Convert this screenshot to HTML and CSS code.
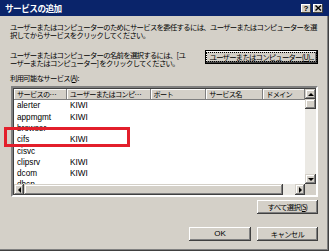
FILE: index.html
```html
<!DOCTYPE html>
<html>
<head>
    <title>サービスの追加</title>
    <link rel="stylesheet" href="styles.css">
</head>
<body>
    <div class="window">
        <div class="titlebar">
            <span class="title">サービスの追加</span>
            <div class="title-buttons">
                <span class="tbtn">?</span>
                <span class="tbtn tbtn-close">
                    <svg width="7" height="6" viewBox="0 0 7 6"><path d="M0.5 0.5 L6 5.5 M6 0.5 L0.5 5.5" stroke="#000" stroke-width="1.4"/></svg>
                </span>
            </div>
        </div>

        <div class="content">
            <p class="intro">ユーザーまたはコンピューターのためにサービスを委任するには、ユーザーまたはコンピューターを選<br>択してからサービスをクリックしてください。</p>

            <div class="pick-row">
                <p class="intro">ユーザーまたはコンピューターの名前を選択するには、[ユ<br>ーザーまたはコンピューター] をクリックしてください。</p>
                <button class="btn btn-default"><span class="focus">ユーザーまたはコンピューター(<u>U</u>)...</span></button>
            </div>

            <div class="label">利用可能なサービス(<u>A</u>):</div>

            <div class="listview">
                <div class="list-main">
                    <div class="list-header">
                        <div class="hcol c1 cut">サービスの種類</div>
                        <div class="hcol c2 cut">ユーザーまたはコンピューター</div>
                        <div class="hcol c3">ポート</div>
                        <div class="hcol c4">サービス名</div>
                        <div class="hcol c5">ドメイン</div>
                    </div>
                    <div class="list-rows">
                        <div class="row"><span class="c1">alerter</span><span class="c2">KIWI</span></div>
                        <div class="row"><span class="c1">appmgmt</span><span class="c2">KIWI</span></div>
                        <div class="row"><span class="c1">browser</span><span class="c2"></span></div>
                        <div class="row"><span class="c1">cifs</span><span class="c2">KIWI</span></div>
                        <div class="row"><span class="c1">cisvc</span><span class="c2"></span></div>
                        <div class="row"><span class="c1">clipsrv</span><span class="c2">KIWI</span></div>
                        <div class="row"><span class="c1">dcom</span><span class="c2">KIWI</span></div>
                        <div class="row"><span class="c1">dhcp</span><span class="c2"></span></div>
                    </div>
                </div>
                <div class="vscroll">
                    <div class="sbtn"><span class="arrow up"></span></div>
                    <div class="vthumb"></div>
                    <div class="track"></div>
                    <div class="sbtn"><span class="arrow down"></span></div>
                </div>
                <div class="hscroll">
                    <div class="sbtn sbtn-h"><span class="arrow left"></span></div>
                    <div class="hthumb"></div>
                    <div class="track"></div>
                    <div class="sbtn sbtn-h"><span class="arrow right"></span></div>
                </div>
                <div class="corner"></div>
            </div>

            <div class="btn-row">
                <button class="btn btn-wide">すべて選択(<u>S</u>)</button>
            </div>

            <div class="btn-row btn-row-bottom">
                <button class="btn btn-ok">OK</button>
                <button class="btn btn-wide">キャンセル</button>
            </div>
        </div>

        <div class="highlight"></div>
    </div>
</body>
</html>
```

FILE: styles.css
```css
* {
    box-sizing: border-box;
}

body {
    margin: 0;
    padding: 0;
    font-family: "Noto Sans CJK JP", "Liberation Sans", sans-serif;
}

.window {
    position: relative;
    width: 329px;
    height: 251px;
    background: #d4d0c8;
    box-shadow: inset -1px -1px #404040, inset -2px -2px #808080;
    display: flex;
    flex-direction: column;
    overflow: hidden;
}

.titlebar {
    height: 16px;
    background: #0a246a;
    color: white;
    display: flex;
    align-items: center;
    justify-content: space-between;
    padding: 0 5px 0 5px;
}

.title {
    font-weight: bold;
    font-size: 8.6px;
    letter-spacing: -0.5px;
    line-height: 16px;
}

.title-buttons {
    display: flex;
    gap: 2px;
    padding-right: 1px;
}

.tbtn {
    width: 10px;
    height: 9px;
    background: #d4d0c8;
    color: black;
    font-family: "Liberation Sans", sans-serif;
    font-weight: bold;
    font-size: 8px;
    line-height: 9px;
    text-align: center;
    display: flex;
    align-items: center;
    justify-content: center;
    box-shadow: inset -1px -1px #404040, inset 1px 1px #fff;
}

.content {
    padding: 0 11px 0 10px;
    display: flex;
    flex-direction: column;
}

.intro {
    margin: 6.5px 0 0;
    font-size: 7.4px;
    letter-spacing: -0.72px;
    line-height: 8.3px;
    color: #000;
    white-space: nowrap;
}

.pick-row {
    margin-top: 11px;
    display: flex;
    justify-content: space-between;
    align-items: flex-start;
    height: 14px;
}

.pick-row .intro {
    margin-top: 1px;
}

.btn {
    font-family: "Noto Sans CJK JP", "Liberation Sans", sans-serif;
    font-size: 7.4px;
    letter-spacing: -0.72px;
    color: #000;
    background: #d4d0c8;
    border: none;
    padding: 0;
    height: 13.5px;
    line-height: 13px;
    box-shadow: inset -1px -1px #404040, inset 1px 1px #fff, inset -2px -2px #808080;
    cursor: pointer;
}

.btn-default {
    width: 113px;
    height: 14px;
    border: 1px solid #000;
    padding: 2px 1px;
    line-height: 8px;
    overflow: visible;
}

.btn-default .focus {
    display: block;
    height: 8px;
    white-space: nowrap;
    letter-spacing: -0.8px;
    text-align: center;
    outline: 1px dotted #000;
}

.label {
    margin-top: 10px;
    font-size: 7.4px;
    letter-spacing: -0.72px;
    line-height: 8.3px;
}

.listview {
    margin: 3.7px 0 0 1px;
    height: 111px;
    background: white;
    border-style: solid;
    border-width: 2px;
    border-color: #808080 #fff #fff #808080;
    box-shadow: inset 1px 1px #404040;
    display: grid;
    grid-template-columns: 1fr 11px;
    grid-template-rows: 1fr 11px;
}

.list-main {
    overflow: hidden;
    padding: 1px 0 0 1px;
}

.list-header {
    display: flex;
    height: 11px;
}

.hcol {
    height: 11px;
    background: #d4d0c8;
    box-shadow: inset -1px -1px #808080, inset 1px 1px #fff;
    font-size: 7.2px;
    letter-spacing: -0.7px;
    line-height: 10px;
    padding: 0 0 0 3px;
    white-space: nowrap;
    overflow: hidden;
    text-overflow: ellipsis;
}

.hcol.cut {
    padding-right: 6px;
}

.c1 { width: 53px; }
.c2 { width: 84px; }
.c3 { width: 56px; }
.c4 { width: 57px; }
.c5 { width: 42px; }

.list-rows {
    padding-top: 0.3px;
}

.row {
    display: flex;
    height: 11.3px;
    font-family: "Liberation Sans", sans-serif;
    font-size: 8.2px;
    line-height: 11.3px;
}

.row span {
    padding-left: 3px;
}

.vscroll {
    padding-top: 1px;
    display: flex;
    flex-direction: column;
}

.hscroll {
    display: flex;
    padding-left: 1px;
}

.sbtn {
    width: 11px;
    height: 10px;
    background: #d4d0c8;
    box-shadow: inset -1px -1px #404040, inset 1px 1px #d4d0c8, inset -2px -2px #808080, inset 2px 2px #fff;
    display: flex;
    align-items: center;
    justify-content: center;
    flex-shrink: 0;
}

.sbtn-h {
    width: 10px;
    height: 11px;
}

.vthumb {
    height: 10px;
    background: #d4d0c8;
    box-shadow: inset -1px -1px #404040, inset 1px 1px #d4d0c8, inset -2px -2px #808080, inset 2px 2px #fff;
}

.hthumb {
    width: 259px;
    background: #d4d0c8;
    box-shadow: inset -1px -1px #404040, inset 1px 1px #d4d0c8, inset -2px -2px #808080, inset 2px 2px #fff;
}

.track {
    flex: 1;
    background: #ebe9e4;
}

.corner {
    background: #d4d0c8;
}

.arrow {
    width: 0;
    height: 0;
    border: 3px solid transparent;
}

.arrow.up {
    border-bottom-color: #000;
    border-top-width: 0;
}

.arrow.down {
    border-top-color: #000;
    border-bottom-width: 0;
}

.arrow.left {
    border-right-color: #000;
    border-left-width: 0;
}

.arrow.right {
    border-left-color: #000;
    border-right-width: 0;
}

.btn-row {
    margin-top: 3px;
    display: flex;
    justify-content: flex-end;
    gap: 6px;
}

.btn-row-bottom {
    margin-top: 13.5px;
}

.btn-wide {
    width: 61px;
}

.btn-ok {
    width: 62px;
    font-family: "Liberation Sans", sans-serif;
    font-size: 8px;
    letter-spacing: 0;
}

/* annotation over the list */
.highlight {
    position: absolute;
    left: 4px;
    top: 127px;
    width: 126px;
    height: 20px;
    border: 3px solid #e31f2b;
}
```
